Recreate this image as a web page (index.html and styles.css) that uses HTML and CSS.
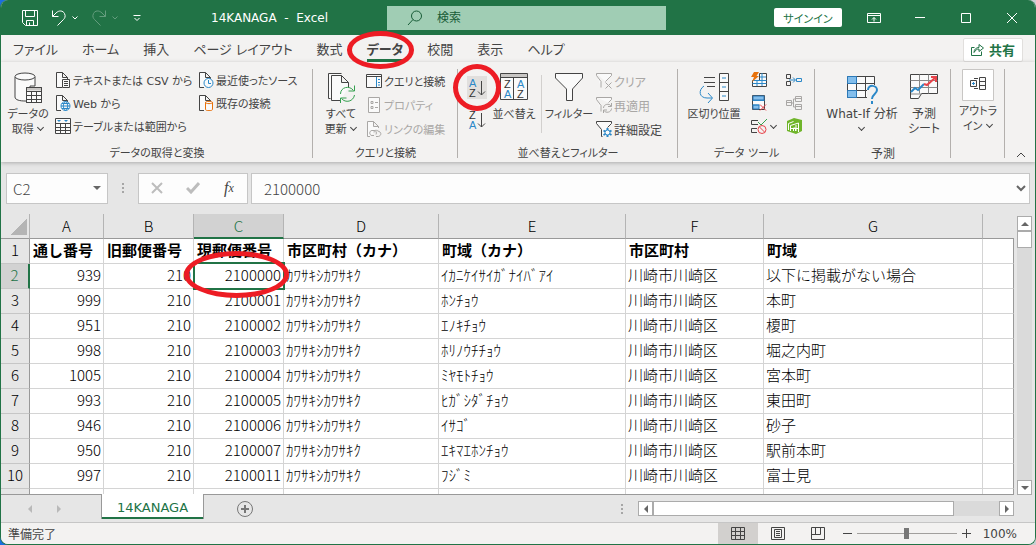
FILE: index.html
```html
<!DOCTYPE html>
<html lang="ja">

<head>
  <meta charset="UTF-8">
  <title>14KANAGA - Excel</title>
  <link rel="stylesheet" href="styles.css">
</head>

<body>
  <div class="window">
    <header class="titlebar">
      <div class="quick">
        <button class="q-save" aria-label="保存"><svg width="18" height="18" viewBox="0 0 18 18"><path d="M1.500 1.500h15v15h-12l-3-3z M4.500 1.500v6h9v-6 M5.500 16.500v-5h7v5 M8.500 13.500v3"/></svg></button>
        <button aria-label="元に戻す"><svg width="18" height="18" viewBox="0 0 18 18"><path d="M2.500 1.500v6h6 M2.500 7.500L6 4c3-3 7-2.500 8.500.5s0 5-1 6L7.500 16.500"/></svg></button>
        <button aria-label="元に戻す一覧"><svg width="8" height="8" viewBox="0 0 8 8"><path d="M1.500 2.500L4 5l2.500-2.500"/></svg></button>
        <button class="off q-redo" aria-label="やり直し" disabled><svg width="18" height="18" viewBox="0 0 18 18"><path d="M15.500 1.500v6h-6 M15.500 7.500L12 4C9 1 5 1.500 3.500 4.500s0 5 1 6l6 6"/></svg></button>
        <button class="off" aria-label="やり直し一覧" disabled><svg width="8" height="8" viewBox="0 0 8 8"><path d="M1.500 2.500L4 5l2.500-2.500"/></svg></button>
        <button class="q-more" aria-label="カスタマイズ"><svg width="8" height="10" viewBox="0 0 8 10"><path d="M.5 2.500h7 M1.500 5L4 7.500 6.500 5"/></svg></button>
      </div>
      <div class="doc-title">14KANAGA&nbsp; -&nbsp; Excel</div>
      <label class="search">
        <svg width="16" height="16" viewBox="0 0 16 16"><circle cx="9.500" cy="6" r="5"/><path d="M6 9.500L1 15"/></svg>
        <input type="text" placeholder="検索" aria-label="検索">
      </label>
      <button class="signin">サインイン</button>
      <div class="win-buttons">
        <button aria-label="リボンの表示オプション"><svg width="14" height="12" viewBox="0 0 14 12"><path d="M.5 1.500h13v9H.5z M.5 3.500h13 M7 9.500V5.500 M5 7.500l2-2 2 2"/></svg></button>
        <button aria-label="最小化"><svg width="12" height="12" viewBox="0 0 12 12"><path d="M1 5.500h10"/></svg></button>
        <button aria-label="最大化"><svg width="12" height="12" viewBox="0 0 12 12"><path d="M1.500 1.500h9v9h-9z"/></svg></button>
        <button aria-label="閉じる"><svg width="12" height="12" viewBox="0 0 12 12"><path d="M1 1l10 10 M11 1L1 11"/></svg></button>
      </div>
    </header>

    <nav class="tabs">
      <a href="#">ファイル</a>
      <a href="#">ホーム</a>
      <a href="#">挿入</a>
      <a href="#">ページ レイアウト</a>
      <a href="#">数式</a>
      <a href="#" class="active">データ<span class="mark mark-tab"></span></a>
      <a href="#">校閲</a>
      <a href="#">表示</a>
      <a href="#">ヘルプ</a>
      <button class="share"><svg width="13" height="13" viewBox="0 0 13 13"><path d="M3.500 4.500h-3v8h10v-4 M3 9.500c0-3 2-5 5-5v-3L12.500 5 8 8.500v-2.500c-2 0-3.500 1-5 3.500z"/></svg>共有</button>
    </nav>

    <section class="ribbon">
      <div class="group g-get">
        <div class="tools">
          <button class="big">
            <svg width="28" height="32" viewBox="0 0 28 32"><path class="w" d="M1 5v20c0 3 5 4 10 4h5V14h5V5"/><ellipse class="w" cx="11" cy="4.500" rx="10" ry="3.500"/><path class="w" d="M12.500 15.500h15v15h-15z"/><path class="gry" d="M13 16h14v2.500H13z"/><path d="M12.500 15.500h15v15h-15z M12.500 19.500h15 M12.500 23.500h15 M12.500 27.500h15 M17.500 19v11 M22.500 19v11"/></svg>
            <span>データの<br>取得 <i class="caret"></i></span>
          </button>
          <div class="stack stack-text">
            <button><svg width="16" height="16" viewBox="0 0 16 16"><path class="w" d="M7 15.500H1.500V.5h6l5 5V7 M7.500.5v5h5"/><path class="w" d="M7.500 7.500h7v8h-7z M9 9.500h4 M9 11.500h4 M9 13.500h4"/></svg>テキストまたは CSV から</button>
            <button><svg width="16" height="16" viewBox="0 0 16 16"><path class="w" d="M6 15.500H1.500V.5h6l5 5V7 M7.500.5v5h5"/><circle class="bl" cx="10.500" cy="11" r="4.500"/><path class="bl" d="M6 11h9 M10.500 6.500c-3 3-3 6 0 9 M10.500 6.500c3 3 3 6 0 9 M7 8.500h7 M7 13.500h7"/></svg>Web から</button>
            <button><svg width="16" height="16" viewBox="0 0 16 16"><path class="w" d="M.5.5h15v15H.5z"/><path d="M.5 5.500h15 M.5 9.500h15 M.5 12.500h15 M5.500 5v10 M10.500 5v10"/><path class="bf" d="M2 2h4L4 4z M9 2h4l-2 2z"/></svg>テーブルまたは範囲から</button>
          </div>
          <div class="stack stack-recent">
            <button><svg width="16" height="16" viewBox="0 0 16 16"><path class="w" d="M6 15.500H1.500V.5h6l5 5V7 M7.500.5v5h5"/><circle class="bl w" cx="10.500" cy="11" r="4.500"/><path class="bl" d="M10.500 8v3.500H13"/></svg>最近使ったソース</button>
            <button><svg width="16" height="16" viewBox="0 0 16 16"><path class="w" d="M6 15.500H1.500V.5h6l5 5V7 M7.500.5v5h5"/><path class="or w" d="M7.500 7.500v7c0 1.500 7 1.500 7 0v-7c0-1.500-7-1.500-7 0c0 1.500 7 1.500 7 0"/></svg>既存の接続</button>
          </div>
        </div>
        <div class="group-name">データの取得と変換</div>
      </div>

      <div class="group g-query">
        <div class="tools">
          <button class="big">
            <svg width="28" height="32" viewBox="0 0 28 32"><path class="w" d="M3.500 26.500h-2V1.500h13"/><path class="w" d="M13 28.500H4.500V3.500h10l7 7v5 M14.500 3.500v7h7"/><path class="gr" d="M13.500 22c0-7 9-9 13-3.500 M27.500 13.500v5.500h-6 M27.500 23c-1 6.500-9 8.500-13 3.500 M13.500 31v-5h6"/></svg>
            <span>すべて<br>更新 <i class="caret"></i></span>
          </button>
          <div class="stack wide">
            <button><svg width="16" height="16" viewBox="0 0 16 16"><path class="w" d="M.5 1.500h15v13H.5z"/><path d="M.5 3.500h15"/><path class="bl" d="M10.500 4v10 M12 6.500h2 M12 9.500h2 M12 12h2"/></svg>クエリと接続</button>
            <button disabled><svg width="16" height="16" viewBox="0 0 16 16"><path class="w" d="M2.500.5h11v15h-11z M5 4.500h2v2H5z M5 9.500h2v2H5z M9 5.500h3 M9 10.500h3"/></svg>プロパティ</button>
            <button disabled><svg width="16" height="16" viewBox="0 0 16 16"><path class="w" d="M4 15.500H1.500V.5h6l5 5V7 M7.500.5v5h5"/><path d="M8 14.500H6c-3 0-3-5 0-5h2c2 0 3 2 2 4 M8 11.500c0-2 2-3 4-1.500l2 1c2 2 0 4.500-2 4.500h-2"/></svg>リンクの編集</button>
          </div>
        </div>
        <div class="group-name">クエリと接続</div>
      </div>

      <div class="group g-sort">
        <div class="tools">
          <div class="az">
            <button class="pressed" aria-label="昇順"><svg width="18" height="20" viewBox="0 0 18 20"><text class="blue" x="1" y="9">A</text><text x="1" y="19">Z</text><path d="M13.500 3v14 M10 13.500l3.500 3.500 3.500-3.500"/></svg><span class="mark mark-sort"></span></button>
            <button aria-label="降順"><svg width="18" height="20" viewBox="0 0 18 20"><text x="1" y="9">Z</text><text class="blue" x="1" y="19">A</text><path d="M13.500 3v14 M10 13.500l3.500 3.500 3.500-3.500"/></svg></button>
          </div>
          <button class="big">
            <svg width="28" height="32" viewBox="0 0 28 32"><path class="w" d="M.5 1.500h27v26H.5z"/><path class="gry" d="M1 2h26v3H1z"/><path d="M.5 5.500h27 M13.500 5v22"/><text x="4" y="16">Z</text><text class="blue" x="4" y="26">A</text><text class="blue" x="17" y="16">A</text><text x="17" y="26">Z</text></svg>
            <span>並べ替え</span>
          </button>
          <div class="sep"></div>
          <button class="big b-filter">
            <svg width="28" height="32" viewBox="0 0 28 32"><path class="w" d="M.5 1.500h27V6L17.500 17v11.500h-6V17L.5 6z"/></svg>
            <span>フィルター</span>
          </button>
          <div class="stack wide">
            <button disabled><svg width="16" height="16" viewBox="0 0 16 16"><path class="w" d="M.5.5h15v2l-6 6 M5 14.500V8.500L.5 2.500v-2"/><path d="M9.500 9.500l6 6 M15.500 9.500l-6 6"/></svg>クリア</button>
            <button disabled><svg width="16" height="16" viewBox="0 0 16 16"><path class="w" d="M.5.5h15v2l-3 3 M5 14.500V8.500L.5 2.500v-2"/><path d="M7.500 11c0-4 6-5 7.500-2 M15.500 6v3.500H12 M15.500 11.500c0 4-6 5-7.500 2 M7.500 16v-3H11"/></svg>再適用</button>
            <button><svg width="16" height="16" viewBox="0 0 16 16"><path class="w" d="M6.500 15.500H5.500V8.500L.5 2.500v-2h15v2l-4 4"/><path class="bl" stroke-width="2" d="M11.500 7v9 M7.500 9.500l8 4.500 M15.500 9.500l-8 4.500"/><circle class="bl w" cx="11.500" cy="11.500" r="2.500"/></svg>詳細設定</button>
          </div>
        </div>
        <div class="group-name">並べ替えとフィルター</div>
      </div>

      <div class="group g-tools">
        <div class="tools">
          <button class="big b-split">
            <svg width="32" height="32" viewBox="0 0 32 32"><path class="w" d="M21.500 1.500h9v27h-9z"/><path d="M21.500 10.500h9 M21.500 19.500h9 M6 5.500h11 M6 10.500h11 M9 14.500h8"/><path class="bl" d="M24 6h4 M24 15h4 M24 24h4 M6 14c-6 4-5 12 3 12h5 M10 21l4.500 5-4.500 5"/></svg>
            <span>区切り位置</span>
          </button>
          <div class="stack icons">
            <button aria-label="フラッシュ フィル"><svg width="18" height="16" viewBox="0 0 18 16"><path class="w" d="M2.500 14.500V8.500h14v6z M9.500 1.500h7v7h-7z"/><path class="bl" d="M2.500 8.500h14 M7 8v6 M12 1v13 M2.500 11.500h14 M10 5h6"/><path class="of" d="M4 0h5L6.500 4H9L2 10l2-5H1z"/></svg></button>
            <button aria-label="重複の削除"><svg width="18" height="16" viewBox="0 0 18 16"><path class="w" d="M2.500.5h12v14h-12z"/><path class="lb" d="M3 1h11v4H3z M3 10h6v4H3z"/><path class="bl" d="M2.500 5.500h12 M2.500 10h7"/><path class="rd" d="M10 9.500l6 6 M16 9.500l-6 6"/></svg></button>
            <button aria-label="データの入力規則"><svg width="18" height="16" viewBox="0 0 18 16"><path d="M8 2.500H1.500v4H8 M7 10.500H1.500v4H7"/><path class="gr" d="M8 4l3 3 6-6"/><circle class="rd" cx="12" cy="11.500" r="4"/><path class="rd" d="M9.500 9l5 5"/></svg></button>
          </div>
          <i class="caret"></i>
          <div class="stack icons">
            <button aria-label="統合"><svg width="18" height="16" viewBox="0 0 18 16"><path d="M1.500 2.500h4v4h-4z M1.500 9.500h4v4h-4z"/><path class="bl" d="M4 8h6 M8 5.500L10.500 8 8 10.500 M11.500 6.500h5v3h-5z"/></svg></button>
            <button aria-label="リレーションシップ" disabled><svg width="18" height="16" viewBox="0 0 18 16"><path d="M1.500 5.500h5v5h-5z M1.500 7.500h5 M10.500 1.500h6v5h-6z M10.500 3.500h6 M10.500 9.500h6v5h-6z M10.500 11.500h6 M6.500 8h2 M10.500 4h-2v8h2"/></svg></button>
            <button aria-label="データ モデルの管理"><svg width="18" height="16" viewBox="0 0 18 16"><path class="gf" d="M2 3l7-3 8 2v11l-6 3-9-3z"/><path class="wl" d="M3.500 12V5.500l5-2 M5.500 13V7.500l8-2.500v9 M8.500 13v-3h2v3 M11 7v6 M6 10.500h7"/></svg></button>
          </div>
        </div>
        <div class="group-name">データ ツール</div>
      </div>

      <div class="group g-forecast">
        <div class="tools">
          <button class="big b-whatif">
            <svg width="32" height="32" viewBox="0 0 32 32"><path class="w" d="M1.500 4.500h27v21h-27z"/><path d="M1.500 11.500h27 M1.500 18.500h27 M10.500 4.500v21 M19.500 4.500v21"/><path class="lb" d="M1.500 4.500h9v7h-9z M1.500 18.500h9v7h-9z"/><path class="bg" d="M21 13h11v19H21z"/><path class="bl" stroke-width="2" d="M22 18c0-6 9-5 9 0 0 4-5 4-5 9 M26 29v3"/></svg>
            <span>What-If 分析<br><i class="caret"></i></span>
          </button>
          <button class="big b-sheet">
            <svg width="28" height="32" viewBox="0 0 28 32"><path class="w" d="M.5 2.500h27v19h-16l-3 5h-8z"/><path class="thin" d="M.5 8.500h27 M.5 15.500h27 M9.500 2.500v19 M18.500 2.500v19 M1 22h11"/><path class="bl" stroke-width="2" d="M1 20l4-4 3 2 6-6"/><path class="rd" stroke-width="2" d="M14 12l3 1 9-8 M21 5h5v5"/></svg>
            <span>予測<br>シート</span>
          </button>
        </div>
        <div class="group-name">予測</div>
      </div>

      <div class="group g-outline">
        <div class="tools">
          <button class="big outline">
            <svg width="32" height="32" viewBox="0 0 32 32"><path class="box" d="M.5.5h31v31H.5z"/><path class="w" d="M17.500 8.500h6v12h-6z M17.500 12.500h6 M17.500 16.500h6 M12 9.500h4 M12 19.500h4 M8.500 11.500h6v6h-6z"/><path class="bl" d="M10 14.500h3 M11.500 13v3"/></svg>
            <span>アウトラ<br>イン <i class="caret"></i></span>
          </button>
        </div>
      </div>
      <button class="collapse" aria-label="リボンを折りたたむ"><svg width="10" height="6" viewBox="0 0 10 6"><path d="M1 5l4-4 4 4"/></svg></button>
    </section>

    <div class="formula-bar">
      <label class="name-box"><input type="text" value="C2" aria-label="名前ボックス"><i class="tri down"></i></label>
      <div class="dots"><i></i><i></i><i></i></div>
      <div class="fx">
        <button aria-label="キャンセル"><svg width="12" height="12" viewBox="0 0 12 12"><path d="M1 1l10 10 M11 1L1 11"/></svg></button>
        <button aria-label="入力"><svg width="14" height="12" viewBox="0 0 14 12"><path class="thick" d="M1 6l4 4 8-9"/></svg></button>
        <button class="fx-label" aria-label="関数の挿入">f<small>x</small></button>
      </div>
      <label class="formula"><input type="text" value="2100000" aria-label="数式バー"><svg width="10" height="7" viewBox="0 0 10 7"><path d="M1 1l4 4 4-4"/></svg></label>
    </div>

    <main class="sheet">
      <div class="grid">
        <table>
          <colgroup>
            <col class="c-row"><col class="c-a"><col class="c-b"><col class="c-b"><col class="c-d"><col class="c-e"><col class="c-f"><col class="c-g"><col>
          </colgroup>
          <thead>
            <tr><th class="corner"></th><th>A</th><th>B</th><th class="sel">C</th><th>D</th><th>E</th><th>F</th><th>G</th><th></th></tr>
          </thead>
          <tbody>
            <tr class="heads"><th>1</th><td>通し番号</td><td>旧郵便番号</td><td>現郵便番号</td><td>市区町村（カナ）</td><td>町域（カナ）</td><td>市区町村</td><td>町域</td><td></td></tr>
            <tr><th class="sel">2</th><td class="num">939</td><td class="num">210</td><td class="num cursor">2100000<span class="mark mark-cell"></span></td><td>ｶﾜｻｷｼｶﾜｻｷｸ</td><td>ｲｶﾆｹｲｻｲｶﾞﾅｲﾊﾞｱｲ</td><td>川崎市川崎区</td><td>以下に掲載がない場合</td><td></td></tr>
            <tr><th>3</th><td class="num">999</td><td class="num">210</td><td class="num">2100001</td><td>ｶﾜｻｷｼｶﾜｻｷｸ</td><td>ﾎﾝﾁｮｳ</td><td>川崎市川崎区</td><td>本町</td><td></td></tr>
            <tr><th>4</th><td class="num">951</td><td class="num">210</td><td class="num">2100002</td><td>ｶﾜｻｷｼｶﾜｻｷｸ</td><td>ｴﾉｷﾁｮｳ</td><td>川崎市川崎区</td><td>榎町</td><td></td></tr>
            <tr><th>5</th><td class="num">998</td><td class="num">210</td><td class="num">2100003</td><td>ｶﾜｻｷｼｶﾜｻｷｸ</td><td>ﾎﾘﾉｳﾁﾁｮｳ</td><td>川崎市川崎区</td><td>堀之内町</td><td></td></tr>
            <tr><th>6</th><td class="num">1005</td><td class="num">210</td><td class="num">2100004</td><td>ｶﾜｻｷｼｶﾜｻｷｸ</td><td>ﾐﾔﾓﾄﾁｮｳ</td><td>川崎市川崎区</td><td>宮本町</td><td></td></tr>
            <tr><th>7</th><td class="num">993</td><td class="num">210</td><td class="num">2100005</td><td>ｶﾜｻｷｼｶﾜｻｷｸ</td><td>ﾋｶﾞｼﾀﾞﾁｮｳ</td><td>川崎市川崎区</td><td>東田町</td><td></td></tr>
            <tr><th>8</th><td class="num">946</td><td class="num">210</td><td class="num">2100006</td><td>ｶﾜｻｷｼｶﾜｻｷｸ</td><td>ｲｻｺﾞ</td><td>川崎市川崎区</td><td>砂子</td><td></td></tr>
            <tr><th>9</th><td class="num">950</td><td class="num">210</td><td class="num">2100007</td><td>ｶﾜｻｷｼｶﾜｻｷｸ</td><td>ｴｷﾏｴﾎﾝﾁｮｳ</td><td>川崎市川崎区</td><td>駅前本町</td><td></td></tr>
            <tr><th>10</th><td class="num">997</td><td class="num">210</td><td class="num">2100011</td><td>ｶﾜｻｷｼｶﾜｻｷｸ</td><td>ﾌｼﾞﾐ</td><td>川崎市川崎区</td><td>富士見</td><td></td></tr>
            <tr><th></th><td></td><td></td><td></td><td></td><td></td><td></td><td></td><td></td></tr>
          </tbody>
        </table>
      </div>
      <div class="vscroll">
        <button aria-label="上へ"><i class="tri up"></i></button>
        <div class="thumb"></div>
        <button class="end" aria-label="下へ"><i class="tri down"></i></button>
      </div>
    </main>

    <div class="sheet-tabs">
      <div class="arrows">
        <button aria-label="前のシート" disabled><i class="tri left"></i></button>
        <button aria-label="次のシート" disabled><i class="tri right"></i></button>
      </div>
      <a href="#" class="sheet-tab">14KANAGA</a>
      <button class="add" aria-label="新しいシート"><svg width="18" height="18" viewBox="0 0 18 18"><circle cx="9" cy="9" r="7.500"/><path class="plus" d="M9 5v8 M5 9h8"/></svg></button>
      <div class="dots"><i></i><i></i><i></i></div>
      <div class="hscroll">
        <button aria-label="左へ"><i class="tri left"></i></button>
        <div class="thumb"></div>
        <button class="end" aria-label="右へ"><i class="tri right"></i></button>
      </div>
    </div>

    <footer class="status">
      <span class="ready">準備完了</span>
      <button class="view on" aria-label="標準"><svg width="14" height="14" viewBox="0 0 14 14"><path d="M.5.5h13v12H.5z M.5 4.500h13 M.5 8.500h13 M4.500 .5v12 M9.500 .5v12"/></svg></button>
      <button class="view" aria-label="ページ レイアウト表示"><svg width="14" height="14" viewBox="0 0 14 14"><path d="M.5.5h13v12H.5z M3.500 2.500h7v8h-7z M5 4.500h4 M5 6.500h4 M5 8.500h4"/></svg></button>
      <button class="view" aria-label="改ページ プレビュー"><svg width="14" height="14" viewBox="0 0 14 14"><path d="M.5.5h13v12H.5z M4.500.5v7 M9.500.5v7 M.5 7.500h9"/></svg></button>
      <button class="zoom-btn" aria-label="縮小"><svg width="9" height="9" viewBox="0 0 9 9"><path d="M0 4.500h9"/></svg></button>
      <input type="range" min="0" max="100" value="50" aria-label="ズーム">
      <button class="zoom-btn" aria-label="拡大"><svg width="9" height="9" viewBox="0 0 9 9"><path d="M0 4.500h9 M4.500 0v9"/></svg></button>
      <span class="percent">100%</span>
    </footer>
  </div>
</body>

</html>
```

FILE: styles.css
```css
* {
  box-sizing: border-box;
}

body {
  margin: 0;
  background: linear-gradient(90deg, #1b6fe0 50%, #c9cfd2 50%);
  font-family: "DejaVu Sans", "Noto Sans CJK JP", sans-serif;
  font-size: 12px;
  color: #444;
}

button,
input {
  font: inherit;
  color: inherit;
  border: none;
  background: none;
  padding: 0;
  margin: 0;
  outline: none;
}

button {
  display: flex;
  align-items: center;
  justify-content: center;
}

a {
  color: inherit;
  text-decoration: none;
}

svg {
  display: block;
  flex: none;
  fill: none;
  stroke: currentColor;
}

.window {
  display: flex;
  flex-direction: column;
  height: 100vh;
  min-height: 400px;
  border: 1px solid #217346;
  border-top: none;
  border-radius: 8px;
  overflow: hidden;
  background: #e6e6e6;
}

/* red rings */
.mark {
  position: absolute;
  border: 5px solid #ed1c24;
  border-radius: 50%;
  z-index: 5;
  pointer-events: none;
}

.mark-tab {
  inset: -4px -11px -7px -20px;
}

.mark-sort {
  inset: -12px -14px -12px;
}

.mark-cell {
  inset: -13px -6px -10px -10px;
}

/* title bar */
.titlebar {
  display: flex;
  align-items: center;
  height: 35px;
  flex: none;
  background: #217346;
  color: #fff;
}

.quick {
  display: flex;
  align-items: center;
  padding-left: 20px;
  gap: 3px;
  width: 210px;
}

.q-save {
  margin-right: 8px;
}

.q-redo {
  margin-left: 8px;
}

.q-more {
  margin-left: 11px;
}

.off {
  opacity: 0.3;
}

.doc-title {
  width: 176px;
  white-space: nowrap;
}

.search {
  display: flex;
  align-items: center;
  flex: 0 1 279px;
  height: 24px;
  padding-left: 20px;
  gap: 14px;
  background: #a0cdb4;
  color: #185c37;
}

.search input {
  flex: 1;
  min-width: 0;
}

.search input::placeholder {
  color: #185c37;
  opacity: 1;
}

.signin {
  width: 68px;
  height: 19px;
  margin-left: auto;
  background: #fff;
  color: #217346;
  border-radius: 2px;
  font-size: 11px;
  font-feature-settings: "palt";
}

.win-buttons {
  display: flex;
  margin-left: 9px;
}

.win-buttons button {
  width: 46px;
  height: 34px;
}

/* tabs */
.tabs {
  display: flex;
  align-items: center;
  height: 27px;
  flex: none;
  background: #f3f2f1;
  font-size: 13px;
  font-feature-settings: "palt";
}

.tabs a {
  position: relative;
  margin: 0 12px;
  line-height: 29px;
  height: 27px;
  white-space: nowrap;
}

.tabs .active {
  font-weight: bold;
}

.tabs .active::after {
  content: "";
  position: absolute;
  left: 0;
  right: 0;
  bottom: 0;
  height: 3px;
  background: #217346;
}

.share {
  width: 60px;
  height: 24px;
  margin: 2px 12px 0 auto;
  gap: 5px;
  background: #fff;
  border: 1px solid #e1dfdd;
  border-radius: 2px;
  color: #217346;
  font-weight: bold;
}

/* ribbon */
.ribbon {
  display: flex;
  height: 100px;
  flex: none;
  background: #f3f2f1;
  font-size: 11px;
  font-feature-settings: "palt";
  box-shadow: 0 1px 4px rgba(0, 0, 0, 0.25);
}

.group {
  position: relative;
  display: flex;
  flex-direction: column;
  flex: none;
}

.group::after {
  content: "";
  position: absolute;
  right: 0;
  top: 7px;
  bottom: 4px;
  width: 1px;
  background: #b3b0ad;
}

.g-get {
  width: 312px;
}

.g-query {
  width: 145px;
}

.g-sort {
  width: 220px;
}

.g-tools {
  width: 137px;
}

.g-forecast {
  width: 136px;
}

.g-outline {
  width: 54px;
}

.tools {
  display: flex;
  flex: 1;
  align-items: flex-start;
}

.group-name {
  line-height: 16px;
  text-align: center;
}

.big {
  flex-direction: column;
  justify-content: flex-start;
  width: 56px;
  padding-top: 10px;
  gap: 3px;
  line-height: 15px;
  text-align: center;
  white-space: nowrap;
}

.stack {
  display: flex;
  flex-direction: column;
  padding-top: 6px;
}

.stack button {
  height: 23px;
  gap: 2px;
  justify-content: flex-start;
  white-space: nowrap;
}

.stack.wide {
  padding-top: 7px;
}

.stack.wide button {
  height: 24px;
}

.stack button:disabled {
  color: #a9a7a5;
}

.stack-text {
  width: 143px;
}

.g-get .big {
  width: 54px;
}

.g-query .big {
  margin-right: -3px;
}

.g-sort .big {
  width: 54px;
}

.g-sort .stack,
.g-forecast {
  font-size: 12px;
}

.az {
  display: flex;
  flex-direction: column;
  padding: 14px 0 0 9px;
  gap: 9px;
}

.az button {
  position: relative;
  width: 20px;
  height: 23px;
}

svg text {
  font: 11px "Liberation Sans", sans-serif;
  fill: #333;
  stroke: none;
}

svg .blue {
  fill: #2b88c8;
}

.pressed {
  background: #e1dfdd;
}

.sep {
  width: 1px;
  height: 58px;
  margin-top: 13px;
  background: #d2d0ce;
}

.b-split {
  width: 72px;
}

.g-tools .caret {
  margin: 61px 9px 0 3px;
}

.b-whatif {
  width: 94px;
}

.b-sheet {
  width: 30px;
}

.outline {
  width: 54px;
  padding-top: 7px;
}

.caret {
  display: inline-block;
  width: 5px;
  height: 5px;
  border: solid #444;
  border-width: 0 1px 1px 0;
  transform: rotate(45deg);
  margin: 0 1px 3px;
}

.collapse {
  align-self: flex-end;
  margin: 0 9px 4px auto;
}

/* icon colours */
.w {
  fill: #fafafa;
}

.bl {
  stroke: #2b88c8;
}

.gr {
  stroke: #35a04f;
}

.or {
  stroke: #e8710a;
}

.rd {
  stroke: #e8444b;
}

.thin {
  stroke: #888;
}

.gry {
  fill: #c8c6c4;
  stroke: none;
}

.lb {
  fill: #83beec;
  stroke: #2b79b8;
}

.bf {
  fill: #2b88c8;
  stroke: none;
}

.of {
  fill: #e8710a;
  stroke: none;
}

.gf {
  fill: #70b52b;
  stroke: none;
}

.wl {
  stroke: #fff;
}

.bg {
  fill: #f3f2f1;
  stroke: none;
}

.box {
  fill: #fff;
  stroke: #c8c6c4;
}

/* formula bar */
.formula-bar {
  display: flex;
  align-items: center;
  flex: none;
  height: 52px;
  padding: 0 5px;
  font-family: "Noto Sans CJK JP", sans-serif;
  font-size: 15px;
  font-weight: 300;
}

.name-box,
.fx,
.formula {
  display: flex;
  align-items: center;
  height: 31px;
  background: #fdfdfd;
  border: 1px solid #c6c6c6;
}

.name-box {
  width: 102px;
  padding: 0 6px;
}

.name-box input,
.formula input {
  flex: 1;
  min-width: 0;
}

.dots {
  display: flex;
  flex-direction: column;
  align-items: center;
  gap: 2px;
  width: 30px;
}

.dots i {
  width: 2px;
  height: 2px;
  background: #a6a6a6;
}

.fx {
  width: 110px;
  margin-right: 3px;
  color: #bdbdbd;
}

.fx button {
  flex: 1;
}

.fx svg {
  stroke-width: 2;
}

.fx .thick {
  stroke-width: 3;
}

.fx .fx-label {
  font: italic 16px "Liberation Serif", serif;
  color: #444;
}

.fx small {
  font-size: 12px;
}

.formula {
  flex: 1;
  padding: 0 3px 0 12px;
}

.formula svg {
  stroke: #666;
  stroke-width: 2;
}

.tri {
  width: 0;
  height: 0;
  border: 4px solid transparent;
}

.down {
  border-top-color: #666;
  border-bottom: none;
}

.up {
  border-bottom-color: #666;
  border-top: none;
}

.left {
  border-right-color: #666;
  border-left: none;
}

.right {
  border-left-color: #666;
  border-right: none;
}

/* sheet */
.sheet {
  display: flex;
  flex: 1;
  min-height: 0;
  font-family: "Noto Sans CJK JP", sans-serif;
}

.grid {
  flex: 1;
  overflow: hidden;
  border-bottom: 1px solid #999;
}

table {
  width: 100%;
  table-layout: fixed;
  border-collapse: separate;
  border-spacing: 0;
  font-size: 15px;
  font-weight: 300;
  color: #000;
}

.c-row {
  width: 29px;
}

.c-a {
  width: 74px;
}

.c-b {
  width: 90px;
}

.c-d {
  width: 155px;
}

.c-e {
  width: 187px;
}

.c-f {
  width: 138px;
}

.c-g {
  width: 219px;
}

th,
td {
  height: 25px;
  padding: 0 2px 3px;
  line-height: 21px;
  white-space: nowrap;
  border-right: 1px solid #d4d4d4;
  border-bottom: 1px solid #d4d4d4;
}

td {
  position: relative;
  background: #fff;
  text-align: left;
}

td:last-child {
  border-right-color: #999;
}

th {
  padding: 0 0 3px;
  background: #e6e6e6;
  font-weight: 300;
  text-align: center;
}

thead th {
  padding-bottom: 2px;
  border-bottom-color: #999;
  border-right: 1px solid #b4b4b4;
}

thead th:last-child {
  border-right: none;
}

tbody th {
  border-right-color: #999;
  border-bottom-color: #c6c6c6;
}

.corner {
  background: linear-gradient(135deg, transparent 50%, #b4b4b4 50%) 9px 5px / 17px 16px no-repeat #e6e6e6;
}

th.sel {
  background: #d2d2d2;
  color: #217346;
}

thead .sel {
  padding-bottom: 1px;
  border-bottom: 2px solid #217346;
}

tbody .sel {
  border-right: 2px solid #217346;
}

.heads td {
  padding-left: 3px;
  font-weight: bold;
}

.num {
  text-align: right;
}

.cursor::before {
  content: "";
  position: absolute;
  inset: -2px -2px -2px -1px;
  border: 2px solid #217346;
  z-index: 1;
}

/* scroll bars */
.vscroll {
  display: flex;
  flex-direction: column;
  width: 15px;
  margin: 2px 3px 0;
  background: #dadada;
}

.vscroll button,
.hscroll button {
  width: 15px;
  height: 15px;
  background: #fff;
  border: 1px solid #ababab;
}

.thumb {
  background: #fff;
  border: 1px solid #ababab;
}

.vscroll .thumb {
  height: 17px;
}

.vscroll .end {
  margin-top: auto;
}

.hscroll {
  display: flex;
  flex: 0 1 376px;
  margin-right: 21px;
  background: #dadada;
}

.hscroll .thumb {
  width: 80%;
}

.hscroll .end {
  margin-left: auto;
}

.sheet-tabs {
  display: flex;
  align-items: center;
  flex: none;
  height: 27px;
}

.arrows {
  display: flex;
  justify-content: center;
  gap: 25px;
  width: 100px;
  padding-right: 14px;
  opacity: 0.35;
}

.sheet-tab {
  align-self: flex-start;
  height: 25px;
  margin-top: -1px;
  padding: 0 15px;
  line-height: 28px;
  background: #fff;
  border: solid #999;
  border-width: 0 1px;
  box-shadow: inset 0 -2px #217346;
  color: #217346;
  font-size: 13px;
  z-index: 1;
}

.add {
  margin-left: 32px;
  color: #777;
}

.plus {
  stroke-width: 2;
}

.sheet-tabs .dots {
  width: 32px;
  margin-left: auto;
}

/* status bar */
.status {
  display: flex;
  align-items: center;
  flex: none;
  height: 22px;
  padding: 0 18px 0 7px;
  background: #f3f2f1;
  border-top: 1px solid #c6c6c6;
}

.ready {
  margin-right: auto;
}

.view {
  width: 40px;
  height: 21px;
}

.view.on {
  background: #d2d0ce;
}

.zoom-btn {
  width: 9px;
}

.view + .zoom-btn {
  margin-left: 5px;
}

input[type="range"] {
  appearance: none;
  width: 100px;
  height: 12px;
  margin: 0 5px;
  background: linear-gradient(#a19f9d, #a19f9d) center / 100% 1px no-repeat;
}

input[type="range"]::-webkit-slider-thumb {
  appearance: none;
  width: 5px;
  height: 11px;
  background: #777;
}

.percent {
  margin-left: 12px;
}
```
